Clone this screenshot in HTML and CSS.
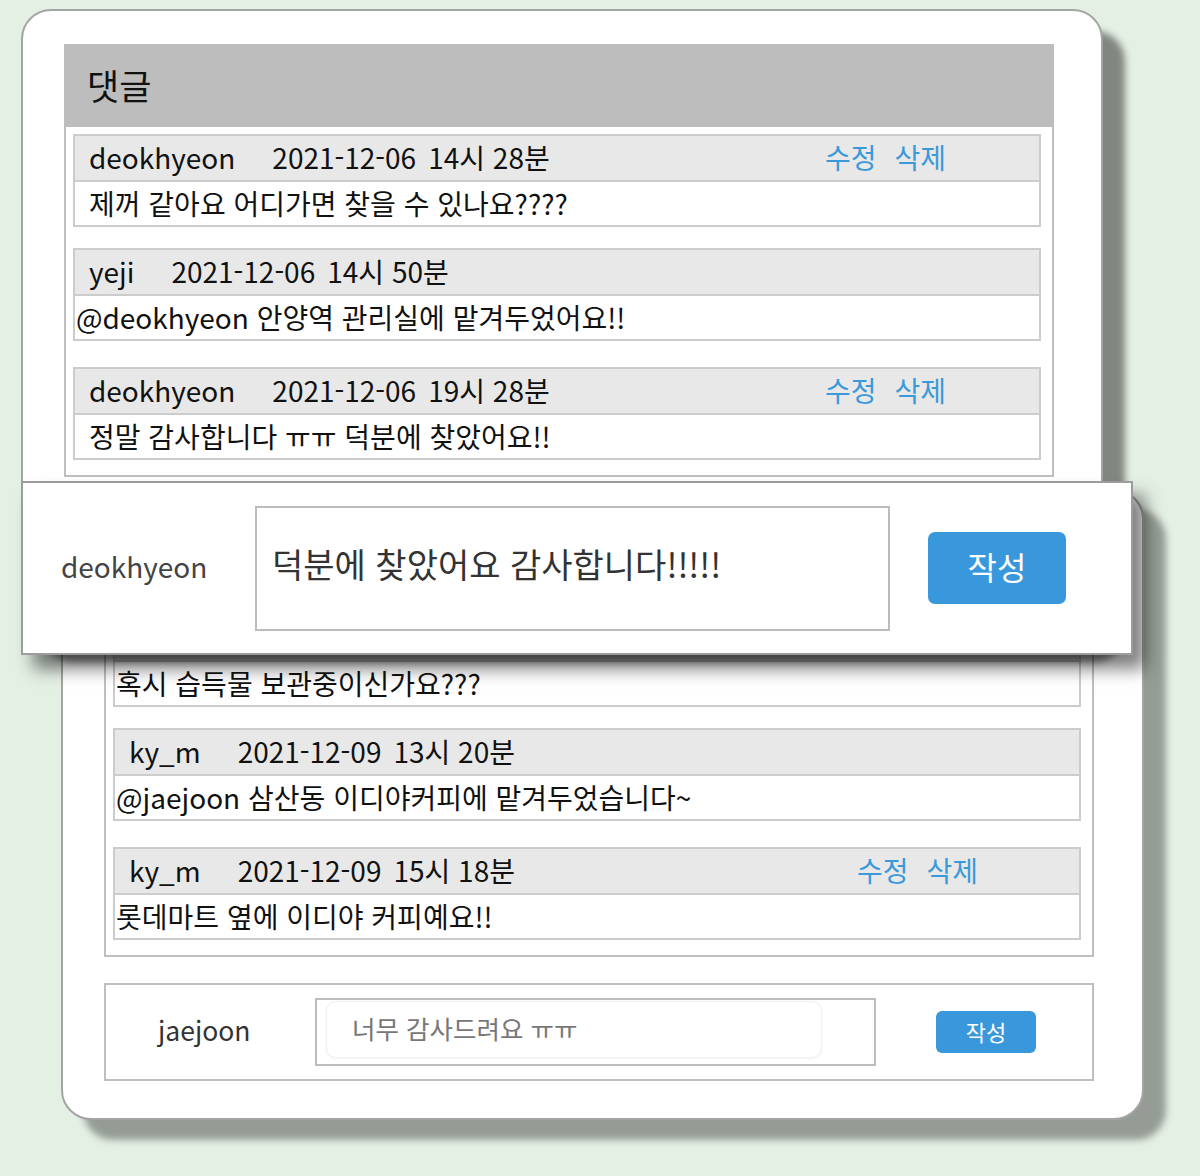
FILE: index.html
```html
<!DOCTYPE html>
<html lang="ko">
<head>
<meta charset="utf-8">
<title>댓글</title>
<link rel="stylesheet" href="styles.css">
</head>
<body>
<div class="stage">

  <section class="card card--back">
    <div class="board">
      <div class="board__title"></div>
      <div class="board__list">
        <article class="comment">
          <div class="comment__head"></div>
          <p class="comment__body comment__body--flush">혹시 습득물 보관중이신가요???</p>
        </article>
        <article class="comment">
          <div class="comment__head">
            <span class="comment__user">ky_m</span>
            <span class="comment__date">2021-12-09</span>
            <span class="comment__time">13시 20분</span>
          </div>
          <p class="comment__body comment__body--flush">@jaejoon 삼산동 이디야커피에 맡겨두었습니다~</p>
        </article>
        <article class="comment comment--wide">
          <div class="comment__head">
            <span class="comment__user">ky_m</span>
            <span class="comment__date">2021-12-09</span>
            <span class="comment__time">15시 18분</span>
            <span class="comment__actions comment__actions--alt"><a class="comment__link">수정</a><a class="comment__link">삭제</a></span>
          </div>
          <p class="comment__body comment__body--flush">롯데마트 옆에 이디야 커피예요!!</p>
        </article>
      </div>
    </div>
    <form class="composer">
      <span class="composer__user">jaejoon</span>
      <div class="composer__box">
        <input class="composer__input" type="text" placeholder="너무 감사드려요 ㅠㅠ">
      </div>
      <button class="composer__btn" type="button">작성</button>
    </form>
  </section>

  <section class="card card--front">
    <div class="board">
      <div class="board__title">댓글</div>
      <div class="board__list">
        <article class="comment">
          <div class="comment__head">
            <span class="comment__user">deokhyeon</span>
            <span class="comment__date">2021-12-06</span>
            <span class="comment__time">14시 28분</span>
            <span class="comment__actions"><a class="comment__link">수정</a><a class="comment__link">삭제</a></span>
          </div>
          <p class="comment__body">제꺼 같아요 어디가면 찾을 수 있나요????</p>
        </article>
        <article class="comment">
          <div class="comment__head">
            <span class="comment__user">yeji</span>
            <span class="comment__date">2021-12-06</span>
            <span class="comment__time">14시 50분</span>
          </div>
          <p class="comment__body comment__body--flush">@deokhyeon 안양역 관리실에 맡겨두었어요!!</p>
        </article>
        <article class="comment comment--wide">
          <div class="comment__head">
            <span class="comment__user">deokhyeon</span>
            <span class="comment__date">2021-12-06</span>
            <span class="comment__time">19시 28분</span>
            <span class="comment__actions"><a class="comment__link">수정</a><a class="comment__link">삭제</a></span>
          </div>
          <p class="comment__body">정말 감사합니다 ㅠㅠ 덕분에 찾았어요!!</p>
        </article>
      </div>
    </div>
  </section>

  <form class="popup">
    <span class="popup__user">deokhyeon</span>
    <textarea class="popup__text">덕분에 찾았어요 감사합니다!!!!!</textarea>
    <button class="popup__btn" type="button">작성</button>
  </form>

</div>
</body>
</html>
```

FILE: styles.css
```css
* { box-sizing: border-box; }

html, body {
  margin: 0;
  padding: 0;
  background: #e5f0e5;
}

body {
  font-family: "Noto Sans CJK KR", "Noto Sans", sans-serif;
  color: #111;
}

.stage {
  position: relative;
  width: 1200px;
  height: 1176px;
  overflow: hidden;
}

/* ---------- cards (overlapping windows) ---------- */
.card {
  position: absolute;
  width: 1082px;
  height: 631px;
  background: #fff;
  border: 2px solid #a4a4a4;
  border-radius: 30px;
  padding: 33px 0 0 41px;
}

.card--front {
  left: 21px;
  top: 9px;
  box-shadow: 22px 22px 7px rgba(0, 0, 0, 0.44);
}

.card--back {
  left: 61px;
  top: 489px;
  width: 1083px;
  box-shadow: 22px 20px 7px rgba(0, 0, 0, 0.35);
}

/* ---------- board ---------- */
.board {
  width: 990px;
}

.board__title {
  height: 83px;
  background: #bdbdbd;
  display: flex;
  align-items: center;
  padding: 0 0 3px 23px;
  font-size: 35px;
  color: #111;
}

.board__list {
  border: 2px solid #bfbfbf;
  border-top: none;
  padding: 7px 11px 15px 7px;
}

/* ---------- comment ---------- */
.comment {
  border: 2px solid #cccccc;
  font-size: 28px;
}

.comment + .comment {
  margin-top: 21px;
}

.comment--wide.comment--wide {
  margin-top: 26px;
}

.comment__head {
  height: 46px;
  background: #e8e8e8;
  border-bottom: 2px solid #cccccc;
  display: flex;
  align-items: center;
  padding: 0 0 3px 14px;
}

.comment__date {
  margin-left: 37px;
}

.comment__time {
  margin-left: 12px;
}

.comment__actions {
  margin-left: auto;
  margin-right: 93px;
  display: flex;
  gap: 18px;
}

.comment__actions--alt {
  margin-right: 101px;
}

.comment__link {
  color: #3a9ad9;
  cursor: pointer;
}

.comment__body {
  margin: 0;
  height: 43px;
  display: flex;
  align-items: center;
  padding: 0 0 2px 14px;
}

.comment__body--flush {
  padding-left: 1px;
}

/* ---------- composer (inside back card) ---------- */
.composer {
  margin: 26px 0 0 0;
  width: 990px;
  height: 98px;
  border: 2px solid #bfbfbf;
  display: flex;
  align-items: center;
}

.composer__user {
  width: 209px;
  padding: 0 0 5px 52px;
  font-size: 26.5px;
  color: #333;
}

.composer__box {
  width: 561px;
  height: 68px;
  border: 2px solid #bdbdbd;
  padding: 1px 9px;
}

.composer__input {
  display: block;
  width: 496px;
  height: 57px;
  border: 1px solid #f1f1f1;
  border-radius: 10px;
  box-shadow: 0 1px 3px rgba(0, 0, 0, 0.05);
  padding: 0 0 4px 25px;
  font-family: inherit;
  font-size: 25.5px;
  color: #333;
  outline: none;
  background: #fff;
}

.composer__input::placeholder {
  color: #777;
}

.composer__btn {
  margin-left: 60px;
  width: 100px;
  height: 42px;
  border: none;
  border-radius: 6px;
  background: #3898db;
  color: #fff;
  font-family: inherit;
  font-size: 22px;
  padding: 0 0 3px;
}

/* ---------- popup composer ---------- */
.popup {
  position: absolute;
  left: 21px;
  top: 481px;
  width: 1112px;
  height: 174px;
  margin: 0;
  background: #fff;
  border: 2px solid #9c9c9c;
  box-shadow: 12px 14px 16px rgba(0, 0, 0, 0.5);
  display: flex;
  align-items: center;
}

.popup__user {
  width: 232px;
  padding: 0 0 4px 38px;
  font-size: 28px;
  color: #444;
}

.popup__text {
  width: 635px;
  height: 125px;
  border: 2px solid #bcbcbc;
  padding: 31px 15px 0;
  resize: none;
  outline: none;
  font-family: inherit;
  font-size: 34px;
  line-height: 50px;
  color: #333;
  overflow: hidden;
}

.popup__btn {
  margin-left: 38px;
  width: 138px;
  height: 72px;
  border: none;
  border-radius: 7px;
  background: #3898db;
  color: #fff;
  font-family: inherit;
  font-size: 32px;
  padding: 0 0 5px;
}
```
